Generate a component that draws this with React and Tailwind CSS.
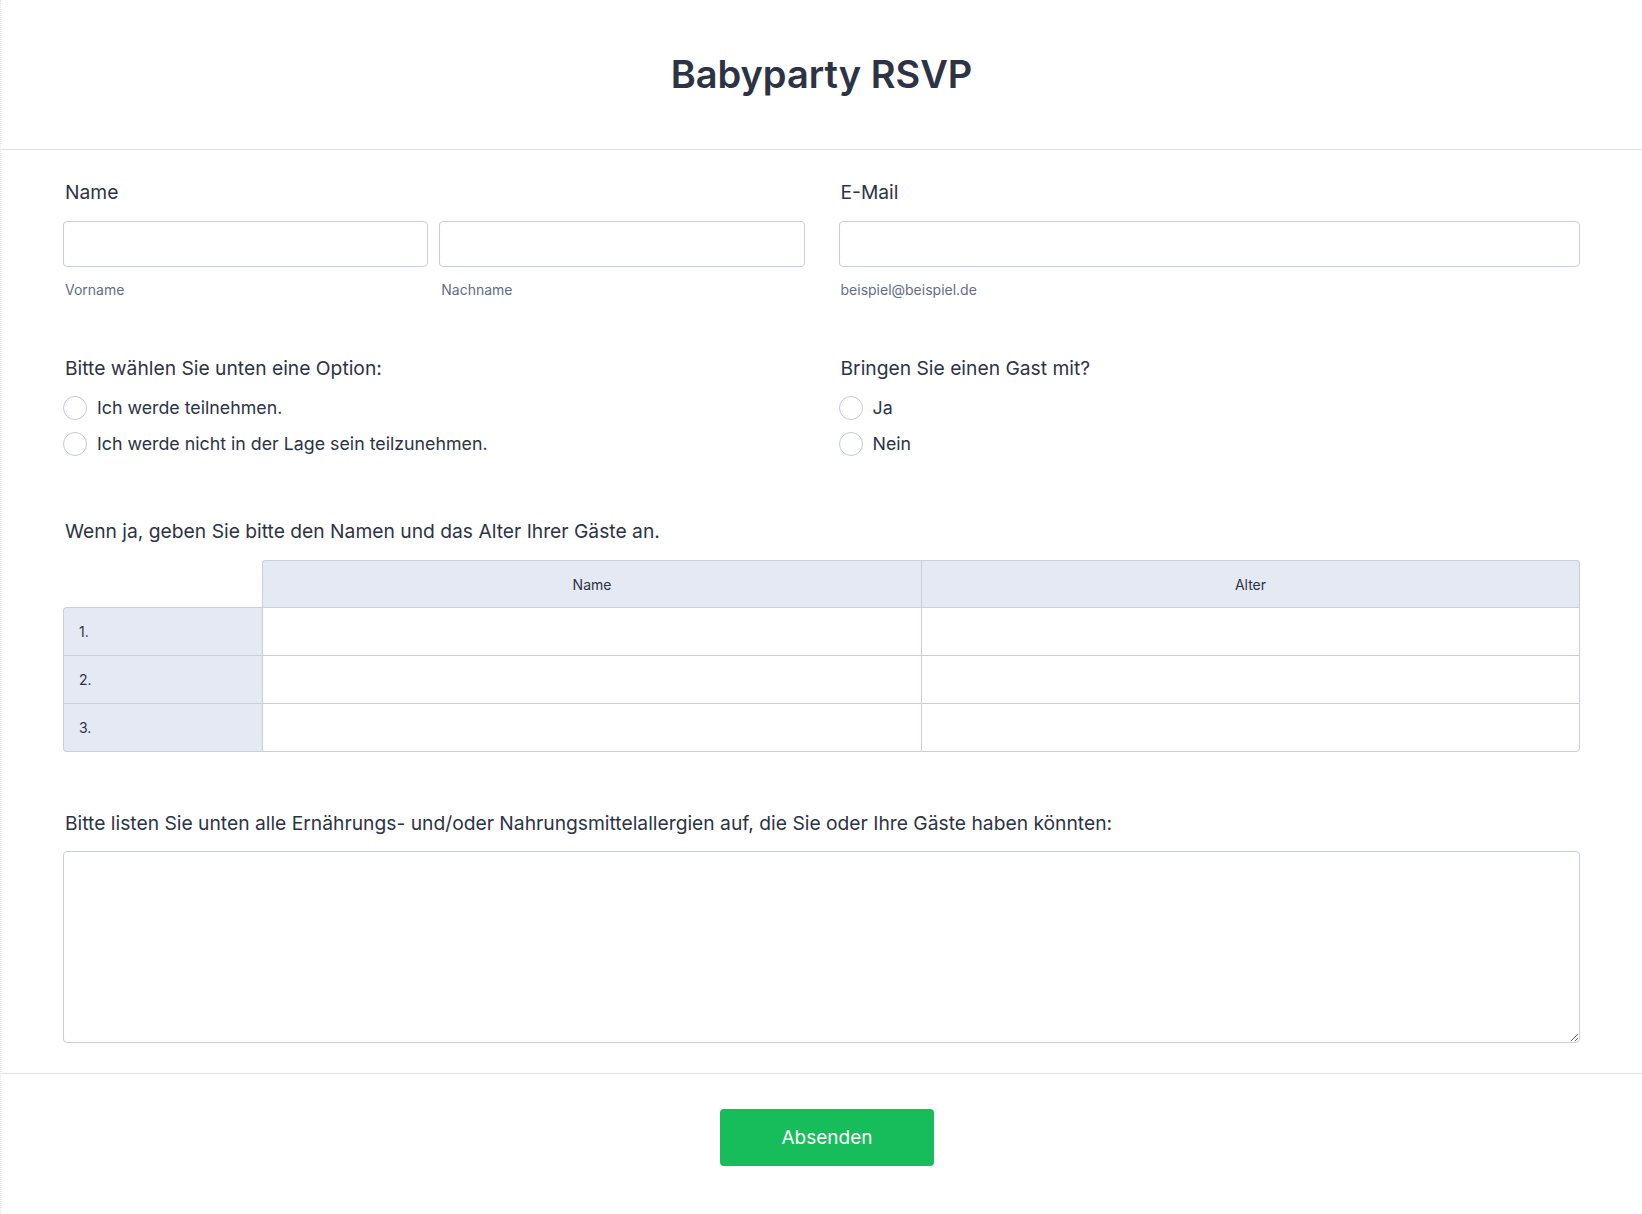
import { useState } from "react";

const line = "border-[#c8cedb]";

function Radio({ label, name }) {
    return (
        <label className="flex items-center h-[30px] cursor-pointer">
            <input type="radio" name={name} className="peer sr-only" />
            <span className="w-[24px] h-[24px] rounded-full border border-[#c3cad8] bg-white shrink-0"></span>
            <span className="ml-[10px] text-[17.8px] text-[#2c3345]">{label}</span>
        </label>
    );
}

function App() {
    const [rows] = useState(["1.", "2.", "3."]);

    return (
        <div className="min-h-screen bg-white text-[#2c3345] border-l border-dotted border-[#e3e5ec]" style={{ fontFamily: "Inter, 'Noto Sans', sans-serif" }}>

            {/* Header */}
            <div className="h-[150px] flex items-center justify-center border-b border-[#dfe3eb]">
                <h1 className="text-[38px] font-semibold">Babyparty RSVP</h1>
            </div>

            <div className="px-[62px] pt-[30px]">

                {/* Name / E-Mail */}
                <div className="grid grid-cols-2 gap-[34px]">
                    <div>
                        <div className="text-[19.25px] leading-6 mb-[17px] pl-[2px]">Name</div>
                        <div className="grid grid-cols-2 gap-[11px]">
                            <div>
                                <input className={`w-full h-[46px] rounded-[4px] border ${line} bg-white`} />
                                <div className="mt-[13px] pl-[2px] text-[14px] leading-5 text-[#626e85]">Vorname</div>
                            </div>
                            <div>
                                <input className={`w-full h-[46px] rounded-[4px] border ${line} bg-white`} />
                                <div className="mt-[13px] pl-[2px] text-[14px] leading-5 text-[#626e85]">Nachname</div>
                            </div>
                        </div>
                    </div>
                    <div>
                        <div className="text-[19.25px] leading-6 mb-[17px] pl-[2px]">E-Mail</div>
                        <input className={`w-full h-[46px] rounded-[4px] border ${line} bg-white`} />
                        <div className="mt-[13px] pl-[2px] text-[14px] leading-5 text-[#626e85]">beispiel@beispiel.de</div>
                    </div>
                </div>

                {/* Radios */}
                <div className="grid grid-cols-2 gap-[34px] mt-[56px]">
                    <div>
                        <div className="text-[19.25px] leading-6 pl-[2px]">Bitte wählen Sie unten eine Option:</div>
                        <div className="flex flex-col gap-[6px] mt-[13px]">
                            <Radio name="teilnahme" label="Ich werde teilnehmen." />
                            <Radio name="teilnahme" label="Ich werde nicht in der Lage sein teilzunehmen." />
                        </div>
                    </div>
                    <div>
                        <div className="text-[19.25px] leading-6 pl-[2px]">Bringen Sie einen Gast mit?</div>
                        <div className="flex flex-col gap-[6px] mt-[13px]">
                            <Radio name="gast" label="Ja" />
                            <Radio name="gast" label="Nein" />
                        </div>
                    </div>
                </div>

                {/* Guests table */}
                <div className="mt-[60px]">
                    <div className="text-[19.25px] leading-6 mb-[17px] pl-[2px]">Wenn ja, geben Sie bitte den Namen und das Alter Ihrer Gäste an.</div>
                    <div className="grid grid-cols-[199px_1fr_1fr]">
                        <div className="h-[47px]"></div>
                        <div className={`h-[47px] bg-[#e5e9f4] border-t border-l ${line} rounded-tl-[4px] flex items-center justify-center text-[14px]`}>Name</div>
                        <div className={`h-[47px] bg-[#e5e9f4] border-t border-l border-r ${line} rounded-tr-[4px] flex items-center justify-center text-[14px]`}>Alter</div>

                        {rows.map((r, i) => (
                            <div key={r} className="contents">
                                <div className={`h-[48px] bg-[#e5e9f4] border-t border-l ${line} flex items-center pl-[15px] text-[14px] ${i === 0 ? "rounded-tl-[4px]" : ""} ${i === rows.length - 1 ? "h-[49px] border-b rounded-bl-[4px]" : ""}`}>{r}</div>
                                <div className={`h-[48px] bg-white border-t border-l ${line} ${i === rows.length - 1 ? "h-[49px] border-b" : ""}`}></div>
                                <div className={`h-[48px] bg-white border-t border-l border-r ${line} ${i === rows.length - 1 ? "h-[49px] border-b rounded-br-[4px]" : ""}`}></div>
                            </div>
                        ))}
                    </div>
                </div>

                {/* Allergies */}
                <div className="mt-[59px] pb-[30px]">
                    <div className="text-[19.25px] leading-6 mb-[16px] pl-[2px]">Bitte listen Sie unten alle Ernährungs- und/oder Nahrungsmittelallergien auf, die Sie oder Ihre Gäste haben könnten:</div>
                    <textarea className={`block w-full h-[192px] rounded-[4px] border ${line} bg-white`}></textarea>
                </div>
            </div>

            {/* Footer */}
            <div className="border-t border-[#dfe3eb] flex justify-center pt-[35px] pb-[48px] pl-[11px]">
                <button className="w-[214px] h-[57px] rounded-[4px] bg-[#18bd5b] text-white text-[19px] pt-[2px]">Absenden</button>
            </div>
        </div>
    );
}

export default App;
